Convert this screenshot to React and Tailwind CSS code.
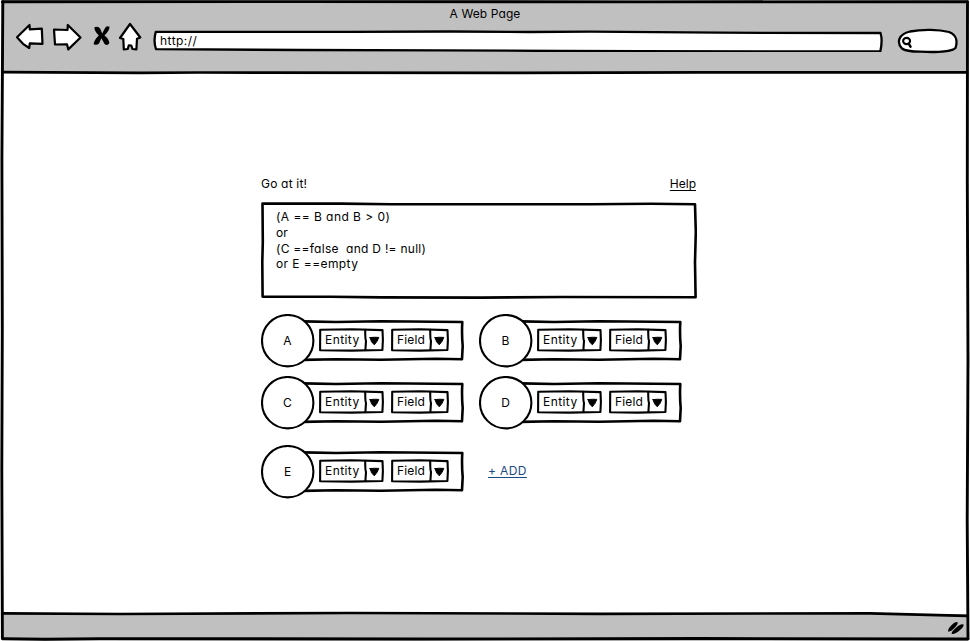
import React from 'react';

const INK = { fill: 'none', stroke: '#000', strokeLinejoin: 'round', strokeLinecap: 'round' };

function WindowFrame() {
  return (
    <svg className="pointer-events-none absolute inset-0" width="970" height="641" viewBox="0 0 970 641" {...INK}>
      <path d="M2.4 1.8 L300 1.6 L640 1.9 L967.5 1.7" strokeWidth="2.9" />
      <path d="M2.8 2 L1.9 160 L2.3 330 L1.8 470 L2.4 638.5" strokeWidth="2.9" />
      <path d="M967.5 2 L967.3 180 L968 360 L967.2 520 L968 638.5" strokeWidth="2.9" />
      <path d="M2.6 638.6 L45 639.2 L100 638.6 L420 639 L700 638.5 L968 639" strokeWidth="2.9" />
      <path d="M3 72.2 L140 72.8 L200 72.5 L520 72.9 L700 72.4 L967 72.4" strokeWidth="2.7" />
      <path d="M3 613.4 L120 614 L350 613 L600 613.8 L870 613.3 L967 615.8" strokeWidth="2.7" />
    </svg>
  );
}

function NavIcons() {
  return (
    <svg className="shrink-0" width="130" height="30" viewBox="15 22 130 30" fill="#fff" stroke="#000" strokeWidth="2.2" strokeLinejoin="round" strokeLinecap="round">
      <path d="M17 37.3 L29.5 25 L29.8 29.3 L41.8 28.6 L42.5 43.8 L29.8 43.3 L29.2 48 L23 43.8 Z" />
      <path d="M80.5 37.5 L67.8 25 L67.5 30 L54 29.5 L55 44.5 L67 44.3 L68.3 49.4 Z" />
      <g fill="#000" stroke="none">
        <path d="M94.4 27.2 Q98.6 25.6 100.2 28.8 L102.2 33.4 L104.8 28.4 Q106.2 25.4 109.6 26.8 Q109.4 30.8 104.4 35.6 Q108.6 38.6 109.4 43 Q107.4 46.2 104.6 44 L101.4 38.2 L99 43.4 Q96.4 46 93.6 44 Q94.2 39.8 98.8 35.4 Q94.2 31.2 94.4 27.2 Z" />
      </g>
      <path d="M130 24 L140.3 37.5 L137 38.8 L136.4 49.5 L132.5 49 L131.3 45.5 L128.8 45.3 L127.8 49 L123.8 49.3 L123.3 39 L120 38 Z" />
    </svg>
  );
}

function AddressBar() {
  return (
    <div className="relative ml-[8px] flex h-[22px] w-[730px] items-center pl-[7px] text-[12px] tracking-[0.45px]">
      <svg className="absolute inset-0" width="730" height="22" viewBox="153 30 730 22" {...INK} fill="#fff" strokeWidth="2.3">
        <path d="M155.8 31.8 L350 31.9 L450 31.5 L530 32 L590 31.7 L720 32.7 L880.5 33 Q882.8 40 880.3 51.5 L640 51.2 L560 51 L440 50.3 L300 50 L156 49.2 Q153.2 41 155.8 31.8 Z" />
      </svg>
      <span className="relative">http://</span>
    </div>
  );
}

function SearchBox() {
  return (
    <svg className="ml-[14px]" width="62" height="26" viewBox="897 28 62 26" {...INK} strokeWidth="2.3">
      <path fill="#fff" d="M910 31.5 C923 29 939 29.6 949 32 C957 35 957.5 42 955.5 48 C952 51.5 938 52.3 927 51.8 C918 51.3 907 52.5 902 48.5 C896 42 899 34 910 31.5 Z" />
      <ellipse cx="906.6" cy="41" rx="3.5" ry="3.1" strokeWidth="2.1" />
      <path d="M908.8 43.8 L910.5 46.6" strokeWidth="2.5" />
    </svg>
  );
}

function Select({ label, wide }) {
  const w = wide ? 65 : 58;
  const d = wide ? 47 : 40;
  return (
    <div className={`relative flex h-[24px] items-center pl-[6px] ${wide ? 'w-[65px]' : 'w-[58px]'}`}>
      <svg className="absolute inset-0" width={w} height="24" viewBox={`0 0 ${w} 24`} {...INK} strokeWidth="2.1">
        <path d={`M1.2 1.8 L${w / 2} 1.3 L${w - 1.5} 2.1 L${w - 1.1} 12 L${w - 1.6} 22 L${w / 2} 22.6 L1.1 22.3 Z`} />
        <path d={`M${d - 0.8} 1.8 Q${d - 0.8} 12 ${d} 13 L${d - 0.6} 22`} />
        <path fill="#000" strokeWidth="1" d={`M${d + 4} 9.6 Q${d + 8.5} 9 ${d + 12.8} 9.4 Q${d + 11.5} 13.6 ${d + 8.3} 16.8 Q${d + 5} 14.5 ${d + 4} 9.6 Z`} />
      </svg>
      <span className={`relative text-[12px] ${wide ? 'tracking-[0.42px]' : 'tracking-[0.15px]'}`}>{label}</span>
    </div>
  );
}

function Condition({ name }) {
  return (
    <div className="relative flex h-[54px] w-[203px] items-center">
      <svg className="absolute inset-0" width="203" height="54" viewBox="0 0 203 54" {...INK}>
        <path strokeWidth="2.6" d="M42 7.4 L75 8 L120 7.2 L201.3 8 Q200.6 20 201.7 32 L201 45.3 L175 44.8 L120 45.8 L75 45.2 L42 45.9" />
        <circle cx="26.7" cy="26.7" r="25.7" fill="#fff" strokeWidth="2.1" />
      </svg>
      <span className="relative w-[53px] text-center text-[12px]">{name}</span>
      <div className="relative -top-px ml-[5px] flex gap-[7px]">
        <Select label="Entity" wide />
        <Select label="Field" />
      </div>
    </div>
  );
}

export default function App() {
  return (
    <div className="relative flex h-[641px] w-[970px] flex-col overflow-hidden bg-white font-['Inter','Lato',sans-serif] text-[12px] text-black [font-feature-settings:'cv11']">
      <header className="mx-[2px] h-[73px] bg-[#c0c0c0]">
        <div className="flex h-[26px] items-center justify-center pt-[2px] tracking-[0.1px]">A Web Page</div>
        <div className="-mt-1 flex h-[30px] items-center pl-[13px]">
          <NavIcons />
          <div className="mt-[8px] flex items-center">
            <AddressBar />
            <SearchBox />
          </div>
        </div>
      </header>

      <main className="flex-1 pl-[261px] pt-[103px]">
        <div className="flex h-[16px] w-[435px] items-center justify-between">
          <span className="tracking-[0.2px]">Go at it!</span>
          <a className="underline underline-offset-2">Help</a>
        </div>
        <div className="relative mt-[10px] h-[97px] w-[436px] pl-[15px] pt-[7px]">
          <svg className="absolute inset-0" width="436" height="97" viewBox="0 0 436 97" {...INK} strokeWidth="2.6">
            <path d="M1.5 1.6 L80 1.6 L130 2.3 L330 2.2 L390 1.8 L434 2.3 L434.8 30 L434 60 L434.6 95.2 L300 95 L220 95.6 L120 95.4 L70 94.8 L1.6 94.6 L1.3 60 L1.8 40 Z" />
          </svg>
          <pre className="relative font-['Inter','Lato',sans-serif] text-[12px] leading-[15.8px] [font-feature-settings:'cv11']">
            <div className="tracking-[0.45px]">{'(A == B and B > 0)'}</div>
            <div className="tracking-[0.1px]">or</div>
            <div className="tracking-[0.27px]">{'(C ==false  and D != null)'}</div>
            <div className="tracking-[0.42px]">or E ==empty</div>
          </pre>
        </div>
        <div className="mt-[15px] flex flex-col">
          <div className="flex gap-[15px]">
            <Condition name="A" />
            <Condition name="B" />
          </div>
          <div className="mt-[8px] flex gap-[15px]">
            <Condition name="C" />
            <Condition name="D" />
          </div>
          <div className="mt-[15px] flex items-center gap-[24px]">
            <Condition name="E" />
            <a className="mb-[2px] tracking-[0.4px] text-[#1c4a85] underline underline-offset-2">+ ADD</a>
          </div>
        </div>
      </main>

      <footer className="mx-[2px] flex h-[27px] items-center justify-end bg-[#c0c0c0] pr-[3px]">
        <svg width="18" height="18" viewBox="947 619 18 18" fill="#000">
          <path d="M948.2 631.6 Q947.6 629 951.2 625.6 Q955 621.6 957.6 622.2 Q958.4 624 954.6 627.8 Q950.6 632 948.2 631.6 Z" />
          <path d="M951.6 633.9 Q951.4 631.6 955.4 628.2 Q960.4 623.4 963.6 624.4 Q964.2 626.4 959.8 630.2 Q954.8 634.6 951.6 633.9 Z" />
        </svg>
      </footer>
      <WindowFrame />
    </div>
  );
}
